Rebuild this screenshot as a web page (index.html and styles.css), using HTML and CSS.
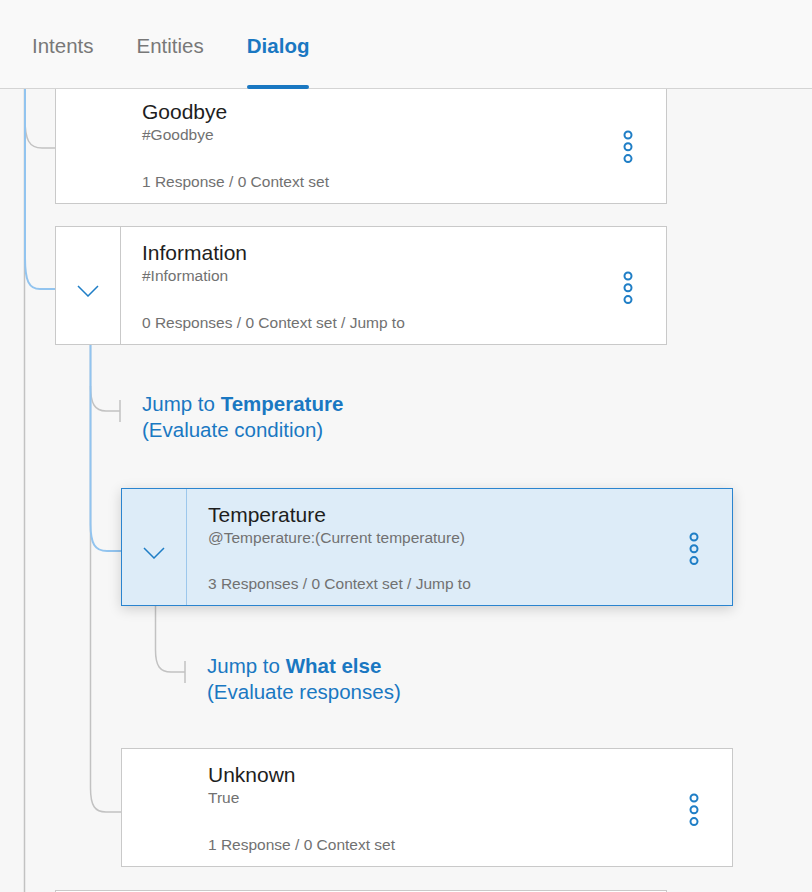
FILE: index.html
```html
<!DOCTYPE html>
<html lang="en">
<head>
<meta charset="utf-8">
<title>Dialog</title>
<link rel="stylesheet" href="styles.css">
</head>
<body>
<header class="tabs">
  <nav class="tab-list">
    <a class="tab">Intents</a>
    <a class="tab">Entities</a>
    <a class="tab tab--active">Dialog</a>
  </nav>
</header>
<main class="canvas">
  <svg class="connectors" width="812" height="892" viewBox="0 0 812 892" aria-hidden="true">
    <g fill="none" stroke="#c2c2c2" stroke-width="1.5">
      <path d="M24.5,80 V892"/>
      <path d="M25,118 C25,140 29,148 42,148 H55"/>
      <path d="M90.5,345 V788 C90.5,806 95,812 106,812 H121"/>
      <path d="M90.5,386 C90.5,404 95,411 106,411 H120"/>
      <path d="M120,400 V422"/>
      <path d="M155.5,606 V650 C155.5,666 160,672 171,672 H185"/>
      <path d="M185,661 V683"/>
    </g>
    <g fill="none" stroke="#92c4ef" stroke-width="2">
      <path d="M25,80 V258 C25,281 29,289 40,289 H55"/>
      <path d="M90.5,345 V524 C90.5,544 95,551 107,551 H121"/>
    </g>
  </svg>

  <div class="level level-1">
    <article class="node node--first">
      <div class="node-toggle"></div>
      <div class="node-body">
        <h3 class="node-title">Goodbye</h3>
        <p class="node-cond">#Goodbye</p>
        <p class="node-meta">1 Response / 0 Context set</p>
      </div>
      <div class="node-menu">
        <svg class="kebab" width="12" height="36" viewBox="0 0 12 36"><circle cx="6" cy="6" r="3.5"/><circle cx="6" cy="17.8" r="3.5"/><circle cx="6" cy="29.6" r="3.5"/></svg>
      </div>
    </article>

    <article class="node">
      <div class="node-toggle node-toggle--open">
        <svg class="chevron" width="22" height="12" viewBox="0 0 22 12"><polyline points="1,1 11,11 21,1"/></svg>
      </div>
      <div class="node-body">
        <h3 class="node-title">Information</h3>
        <p class="node-cond">#Information</p>
        <p class="node-meta">0 Responses / 0 Context set / Jump to</p>
      </div>
      <div class="node-menu">
        <svg class="kebab" width="12" height="36" viewBox="0 0 12 36"><circle cx="6" cy="6" r="3.5"/><circle cx="6" cy="17.8" r="3.5"/><circle cx="6" cy="29.6" r="3.5"/></svg>
      </div>
    </article>

    <div class="level level-2">
      <div class="jump jump--first">
        <p class="jump-line">Jump to <strong>Temperature</strong></p>
        <p class="jump-line">(Evaluate condition)</p>
      </div>

      <article class="node node--selected">
        <div class="node-toggle node-toggle--open">
          <svg class="chevron" width="22" height="12" viewBox="0 0 22 12"><polyline points="1,1 11,11 21,1"/></svg>
        </div>
        <div class="node-body">
          <h3 class="node-title">Temperature</h3>
          <p class="node-cond">@Temperature:(Current temperature)</p>
          <p class="node-meta">3 Responses / 0 Context set / Jump to</p>
        </div>
        <div class="node-menu">
          <svg class="kebab" width="12" height="36" viewBox="0 0 12 36"><circle cx="6" cy="6" r="3.5"/><circle cx="6" cy="17.8" r="3.5"/><circle cx="6" cy="29.6" r="3.5"/></svg>
        </div>
      </article>

      <div class="level level-3">
        <div class="jump jump--second">
          <p class="jump-line">Jump to <strong>What else</strong></p>
          <p class="jump-line">(Evaluate responses)</p>
        </div>
      </div>

      <article class="node node--after-jump">
        <div class="node-toggle"></div>
        <div class="node-body">
          <h3 class="node-title">Unknown</h3>
          <p class="node-cond">True</p>
          <p class="node-meta">1 Response / 0 Context set</p>
        </div>
        <div class="node-menu">
          <svg class="kebab" width="12" height="36" viewBox="0 0 12 36"><circle cx="6" cy="6" r="3.5"/><circle cx="6" cy="17.8" r="3.5"/><circle cx="6" cy="29.6" r="3.5"/></svg>
        </div>
      </article>
    </div>

    <article class="node node--next"></article>
  </div>
</main>
</body>
</html>
```

FILE: styles.css
```css
* {
  box-sizing: border-box;
}

html, body {
  margin: 0;
  padding: 0;
}

body {
  width: 812px;
  height: 892px;
  overflow: hidden;
  background: #f7f7f7;
  font-family: "Liberation Sans", Arial, sans-serif;
  color: #1e1e1e;
}

/* ---------- Tabs header ---------- */
.tabs {
  height: 89px;
  background: #f9f9f9;
  border-bottom: 1px solid #d4d4d4;
}

.tab-list {
  display: flex;
  gap: 43px;
  height: 88px;
  padding-left: 32px;
}

.tab {
  position: relative;
  display: flex;
  align-items: center;
  padding-top: 4px;
  font-size: 20.5px;
  line-height: 24px;
  color: #787878;
  text-decoration: none;
}

.tab--active {
  color: #1a78c2;
  font-weight: bold;
}

.tab--active::after {
  content: "";
  position: absolute;
  left: 0;
  right: 0;
  bottom: -1px;
  height: 4px;
  border-radius: 2px;
  background: #1a78c2;
}

/* ---------- Canvas ---------- */
.canvas {
  position: relative;
  height: 803px;
  overflow: hidden;
}

.connectors {
  position: absolute;
  left: 0;
  top: -89px;
  pointer-events: none;
}

.level-1 {
  margin-left: 55px;
}

.level-2 {
  margin-left: 66px;
}

.level-3 {
  margin-left: 65px;
}

/* ---------- Nodes ---------- */
.node {
  position: relative;
  display: flex;
  width: 612px;
  height: 119px;
  margin-top: 22px;
  background: #ffffff;
  border: 1px solid #c9c9c9;
}

.node--first {
  margin-top: -4px;
}

.node--selected {
  height: 118px;
  margin-top: 45px;
  background: #ddecf8;
  border-color: #2a84cf;
  box-shadow: 0 3px 12px rgba(0, 0, 0, 0.17);
}

.node--after-jump {
  margin-top: 43px;
}

.node--next {
  margin-top: 23px;
}

.node-toggle {
  flex: 0 0 65px;
  display: flex;
  justify-content: center;
  padding-top: 58px;
  border-right: 1px solid transparent;
}

.node-toggle--open {
  border-right-color: #c9c9c9;
}

.node--selected .node-toggle--open {
  border-right-color: #9cc7ec;
}

.chevron {
  fill: none;
  stroke: #1f7ec6;
  stroke-width: 1.5;
}

.node-body {
  flex: 1;
  display: flex;
  flex-direction: column;
  padding: 14px 0 11px 21px;
}

.node-title {
  margin: 0;
  font-size: 21px;
  line-height: 24px;
  font-weight: normal;
  color: #1e1e1e;
}

.node-cond,
.node-meta {
  margin: 0;
  font-size: 15.5px;
  line-height: 20px;
  color: #717171;
}

.node-cond {
  margin-top: 1px;
}

.node-meta {
  margin-top: auto;
}

.node-menu {
  flex: 0 0 76px;
  display: flex;
  align-items: center;
  justify-content: center;
  padding-top: 4px;
}

.kebab {
  fill: none;
  stroke: #1f7ec6;
  stroke-width: 2;
}

/* ---------- Jump labels ---------- */
.jump {
  padding-left: 21px;
  color: #1a78c2;
}

.jump--first {
  margin-top: 46px;
}

.jump--second {
  margin-top: 47px;
}

.jump-line {
  margin: 0;
  font-size: 20.5px;
  line-height: 26px;
}

.jump-line strong {
  font-weight: bold;
}
```
